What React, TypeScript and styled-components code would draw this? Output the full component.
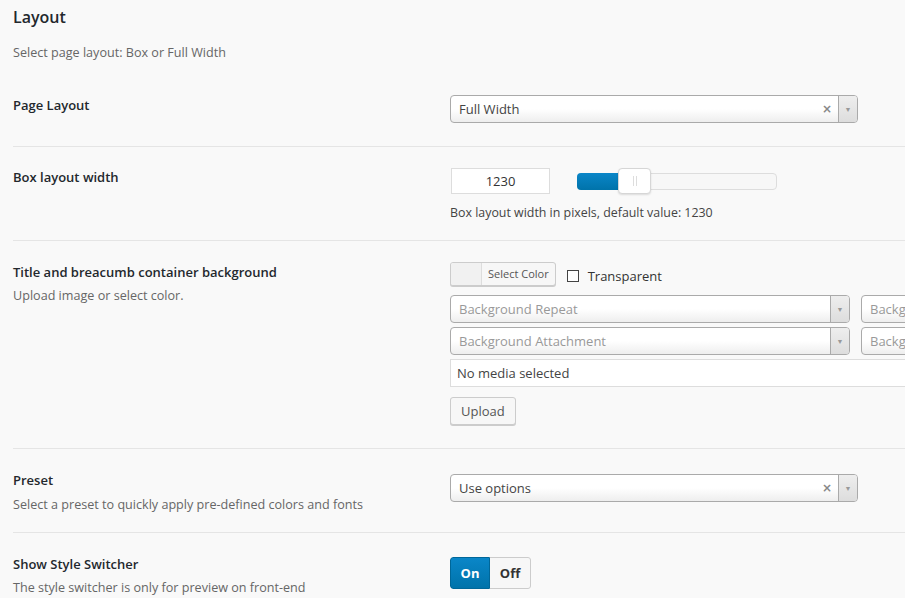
import React from "react";
import styled, { createGlobalStyle } from "styled-components";

const GlobalStyle = createGlobalStyle`
	body {
		margin: 0;
		background: #f9f9f9;
		font-family: "Open Sans", "Noto Sans", sans-serif;
		color: #444;
		overflow: hidden;
	}
`;

const Page = styled.div`
	width: 905px;
	height: 598px;
	overflow: hidden;
	padding-left: 13px;
	box-sizing: border-box;
`;

const Heading = styled.h2`
	margin: 0;
	padding-top: 6px;
	font-size: 16px;
	font-weight: 600;
	line-height: 22px;
	color: #23282d;
`;

const Intro = styled.p`
	margin: 16px 0 0;
	font-size: 12.6px;
	line-height: 18px;
	color: #666;
`;

const Row = styled.div<{ $pt?: number; $pb?: number; $last?: boolean }>`
	display: grid;
	grid-template-columns: 437px 1fr;
	padding: ${(p) => p.$pt ?? 22}px 0 ${(p) => p.$pb ?? 20}px;
	border-bottom: ${(p) => (p.$last ? "none" : "1px solid #e5e5e5")};
`;

const LabelCol = styled.div<{ $mt?: number }>`
	margin-top: ${(p) => p.$mt ?? 0}px;
`;

const Label = styled.div`
	font-size: 13px;
	font-weight: 600;
	line-height: 18px;
	color: #23282d;
`;

const Desc = styled.div<{ $mt?: number }>`
	margin-top: ${(p) => p.$mt ?? 6}px;
	font-size: 12.6px;
	line-height: 18px;
	color: #666;
`;

const Field = styled.div`
	display: flex;
	flex-direction: column;
	align-items: flex-start;
	min-width: 0;
`;

const Select = styled.div<{ $w: number; $h?: number }>`
	display: flex;
	align-items: center;
	width: ${(p) => p.$w}px;
	height: ${(p) => p.$h ?? 28}px;
	box-sizing: border-box;
	border: 1px solid #aaa;
	border-radius: 4px;
	background: linear-gradient(to bottom, #ffffff 0%, #ffffff 50%, #eeeeee 100%);
	flex-shrink: 0;
	overflow: hidden;
`;

const SelectText = styled.span<{ $placeholder?: boolean }>`
	flex: 1;
	padding-left: 8px;
	font-size: 13px;
	color: ${(p) => (p.$placeholder ? "#999" : "#444")};
	white-space: nowrap;
	overflow: hidden;
`;

const Clear = styled.span`
	width: 14px;
	margin-right: 4px;
	font-family: "DejaVu Sans", sans-serif;
	font-size: 12px;
	font-weight: bold;
	color: #888;
	text-align: center;
`;

const Arrow = styled.span`
	display: flex;
	align-items: center;
	justify-content: center;
	width: 18px;
	height: 100%;
	border-left: 1px solid #aaa;
	background: linear-gradient(to bottom, #eeeeee 0%, #dddddd 100%);
	color: #999;
	font-size: 7px;
`;

const SelectLine = styled.div`
	display: flex;
	gap: 11px;
	margin-top: 4px;
`;

const SliderLine = styled.div`
	display: flex;
	align-items: center;
	gap: 27px;
`;

const NumberBox = styled.div`
	width: 99px;
	height: 26px;
	box-sizing: border-box;
	margin-left: 1px;
	border: 1px solid #ddd;
	background: #fff;
	font-size: 13px;
	line-height: 24px;
	text-align: center;
	color: #333;
`;

const Track = styled.div`
	position: relative;
	width: 200px;
	height: 17px;
	box-sizing: border-box;
	border: 1px solid #ddd;
	border-radius: 4px;
	background: #f7f7f7;
`;

const Fill = styled.div`
	position: absolute;
	left: -1px;
	top: -1px;
	bottom: -1px;
	border-radius: 4px 0 0 4px;
	background: linear-gradient(to bottom, #0a86c8, #0073aa);
`;

const Handle = styled.div`
	position: absolute;
	top: -6px;
	width: 33px;
	height: 26px;
	box-sizing: border-box;
	border: 1px solid #d6d6d6;
	border-radius: 4px;
	background: #fff;
	box-shadow: 0 1px 2px rgba(0, 0, 0, 0.12);
	&::before,
	&::after {
		content: "";
		position: absolute;
		top: 7px;
		height: 10px;
		width: 1px;
		background: #ddd;
	}
	&::before {
		left: 14px;
	}
	&::after {
		left: 17px;
	}
`;

const Help = styled.div`
	margin-top: 11px;
	font-size: 12.4px;
	line-height: 16px;
	color: #444;
`;

const ColorLine = styled.div`
	display: flex;
	align-items: center;
	height: 24px;
	margin-bottom: 5px;
`;

const ColorButton = styled.div`
	display: flex;
	height: 24px;
	box-sizing: border-box;
	border: 1px solid #ccc;
	border-radius: 3px;
	background: #f7f7f7;
	box-shadow: 0 1px 0 #ccc;
	overflow: hidden;
`;

const Swatch = styled.span`
	width: 30px;
	border-right: 1px solid #ddd;
	background: #f1f1f1;
`;

const ColorText = styled.span`
	padding: 0 6px;
	font-size: 11px;
	line-height: 22px;
	color: #555;
`;

const CheckLabel = styled.label`
	display: flex;
	align-items: center;
	margin-left: 11px;
	margin-top: 3px;
	font-size: 13px;
	line-height: 18px;
	color: #333;
`;

const Box = styled.span`
	width: 12px;
	height: 12px;
	box-sizing: border-box;
	margin-right: 9px;
	border: 1px solid #444;
	background: #fff;
`;

const MediaInput = styled.div`
	width: 470px;
	height: 28px;
	box-sizing: border-box;
	margin-top: 4px;
	padding-left: 6px;
	border: 1px solid #ddd;
	border-right: none;
	background: #fff;
	font-size: 13px;
	line-height: 26px;
	color: #444;
`;

const Button = styled.button`
	margin-top: 10px;
	height: 28px;
	padding: 0 10px;
	border: 1px solid #ccc;
	border-radius: 3px;
	background: #f7f7f7;
	box-shadow: 0 1px 0 #ccc;
	font-family: "Open Sans", sans-serif;
	font-size: 13px;
	color: #555;
`;

const Switch = styled.div`
	display: flex;
	height: 32px;
	margin-top: 3px;
	border-radius: 3px;
	overflow: hidden;
`;

const SwitchPart = styled.span<{ $on?: boolean }>`
	display: flex;
	align-items: center;
	justify-content: center;
	width: ${(p) => (p.$on ? 40 : 41)}px;
	box-sizing: border-box;
	font-size: 13px;
	font-weight: 700;
	color: ${(p) => (p.$on ? "#fff" : "#333")};
	background: ${(p) => (p.$on ? "linear-gradient(to bottom, #0a86c8, #0073aa)" : "#f7f7f7")};
	border: 1px solid ${(p) => (p.$on ? "#006799" : "#ccc")};
	border-left: ${(p) => (p.$on ? "1px solid #006799" : "none")};
	border-radius: ${(p) => (p.$on ? "3px 0 0 3px" : "0 3px 3px 0")};
`;

const SelectBox = ({
	value,
	width,
	height,
	placeholder,
	clear,
}: {
	value: string;
	width: number;
	height?: number;
	placeholder?: boolean;
	clear?: boolean;
}) => (
	<Select $w={width} $h={height}>
		<SelectText $placeholder={placeholder}>{value}</SelectText>
		{clear && <Clear>×</Clear>}
		<Arrow>▼</Arrow>
	</Select>
);

const App: React.FC = () => {
	const sliderValue = 1230;
	const fill = Math.round(((sliderValue - 940) / (2400 - 940)) * 200);

	return (
		<>
			<GlobalStyle />
			<Page>
				<Heading>Layout</Heading>
				<Intro>Select page layout: Box or Full Width</Intro>

				<Row $pt={33} $pb={23}>
					<LabelCol $mt={1}>
						<Label>Page Layout</Label>
					</LabelCol>
					<Field>
						<SelectBox value="Full Width" width={408} clear />
					</Field>
				</Row>

				<Row $pt={21} $pb={19}>
					<LabelCol $mt={0}>
						<Label>Box layout width</Label>
					</LabelCol>
					<Field>
						<SliderLine>
							<NumberBox>{sliderValue}</NumberBox>
							<Track>
								<Fill style={{ width: fill + 1 }} />
								<Handle style={{ left: fill }} />
							</Track>
						</SliderLine>
						<Help>Box layout width in pixels, default value: 1230</Help>
					</Field>
				</Row>

				<Row $pt={21} $pb={23}>
					<LabelCol $mt={1}>
						<Label>Title and breacumb container background</Label>
						<Desc>Upload image or select color.</Desc>
					</LabelCol>
					<Field>
						<ColorLine>
							<ColorButton>
								<Swatch />
								<ColorText>Select Color</ColorText>
							</ColorButton>
							<CheckLabel>
								<Box />
								Transparent
							</CheckLabel>
						</ColorLine>
						<SelectLine>
							<SelectBox value="Background Repeat" width={400} placeholder />
							<SelectBox value="Background Position" width={200} placeholder />
						</SelectLine>
						<SelectLine>
							<SelectBox value="Background Attachment" width={400} placeholder />
							<SelectBox value="Background Size" width={200} placeholder />
						</SelectLine>
						<MediaInput>No media selected</MediaInput>
						<Button>Upload</Button>
					</Field>
				</Row>

				<Row $pt={25} $pb={18}>
					<LabelCol $mt={-3}>
						<Label>Preset</Label>
						<Desc $mt={7}>Select a preset to quickly apply pre-defined colors and fonts</Desc>
					</LabelCol>
					<Field>
						<SelectBox value="Use options" width={408} clear />
					</Field>
				</Row>

				<Row $pt={21} $pb={20} $last>
					<LabelCol $mt={1}>
						<Label>Show Style Switcher</Label>
						<Desc>The style switcher is only for preview on front-end</Desc>
					</LabelCol>
					<Field>
						<Switch>
							<SwitchPart $on>On</SwitchPart>
							<SwitchPart>Off</SwitchPart>
						</Switch>
					</Field>
				</Row>
			</Page>
		</>
	);
};

export default App;
